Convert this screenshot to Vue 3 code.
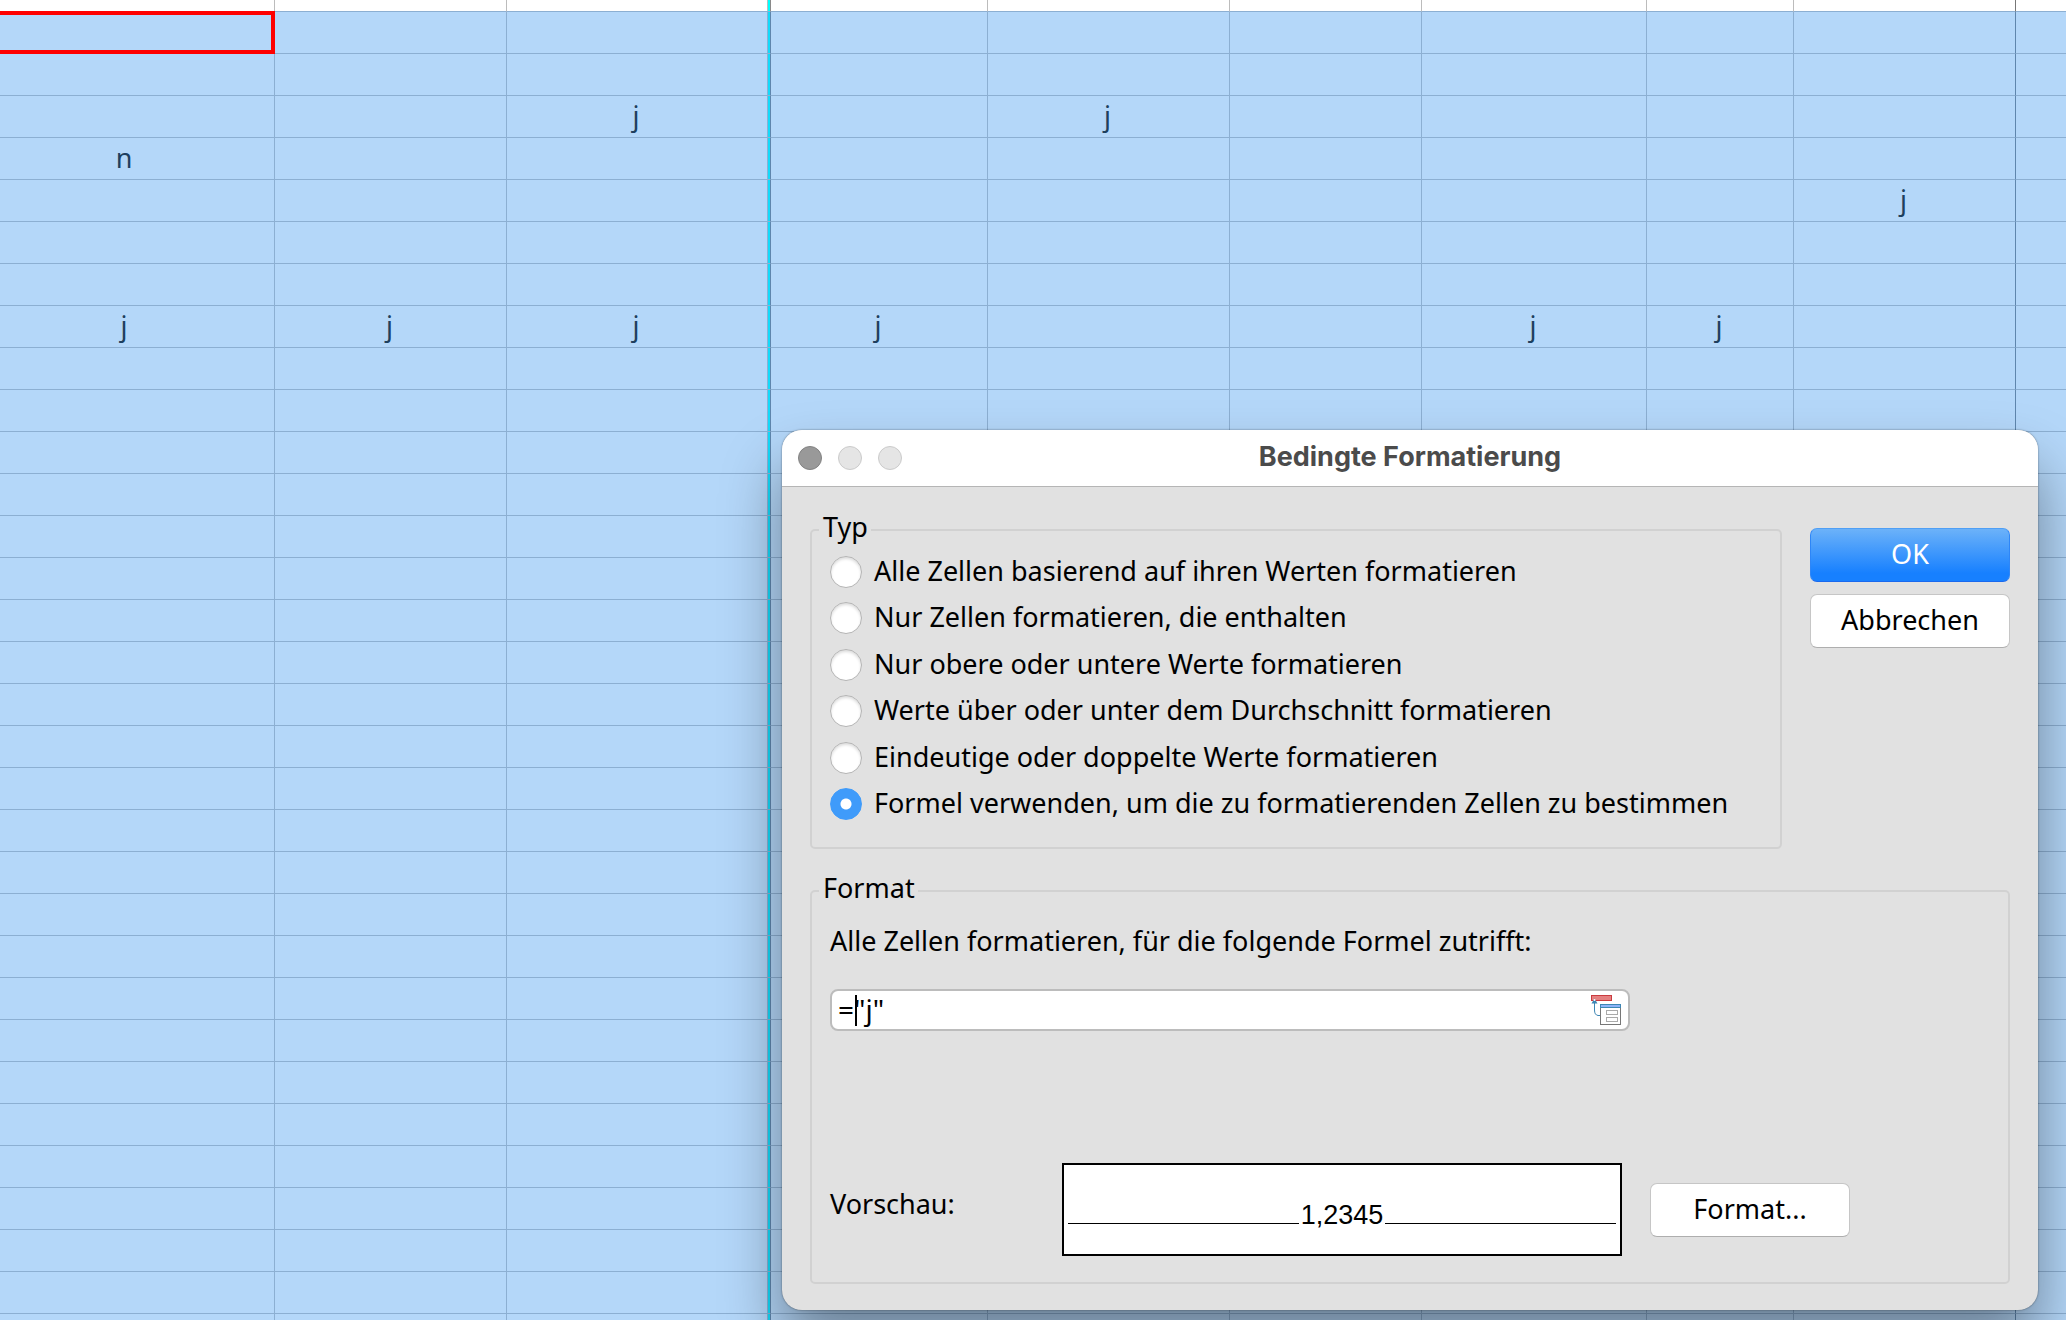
<script setup>
import { ref } from 'vue'

const columnCount = 10
const rowCount = 32

const entries = {
  '2:2': 'j',
  '2:4': 'j',
  '3:0': 'n',
  '4:8': 'j',
  '7:0': 'j',
  '7:1': 'j',
  '7:2': 'j',
  '7:3': 'j',
  '7:6': 'j',
  '7:7': 'j',
}

const rows = Array.from({ length: rowCount }, (_, r) =>
  Array.from({ length: columnCount }, (_, c) => entries[`${r}:${c}`] ?? '')
)

const types = [
  'Alle Zellen basierend auf ihren Werten formatieren',
  'Nur Zellen formatieren, die enthalten',
  'Nur obere oder untere Werte formatieren',
  'Werte über oder unter dem Durchschnitt formatieren',
  'Eindeutige oder doppelte Werte formatieren',
  'Formel verwenden, um die zu formatierenden Zellen zu bestimmen',
]

const selectedType = ref(5)
const formula = ref('="j"')
</script>

<template>
  <main class="workspace">
    <table class="sheet">
      <colgroup>
        <col v-for="n in columnCount" :key="n" :class="`col-${n}`" />
      </colgroup>
      <tbody>
        <tr class="above">
          <td v-for="n in columnCount" :key="n"></td>
        </tr>
        <tr v-for="(row, r) in rows" :key="r">
          <td v-for="(cell, c) in row" :key="c" :class="{ active: r === 0 && c === 0 }">{{ cell }}</td>
        </tr>
      </tbody>
    </table>

    <form class="dialog" role="dialog" aria-labelledby="dialog-title" @submit.prevent>
      <header class="titlebar">
        <div class="lights">
          <button type="button" class="light close" aria-label="Schließen"></button>
          <button type="button" class="light" aria-label="Minimieren" disabled></button>
          <button type="button" class="light" aria-label="Zoomen" disabled></button>
        </div>
        <h1 id="dialog-title">Bedingte Formatierung</h1>
      </header>

      <div class="body">
        <div class="top">
          <fieldset class="group types">
            <legend>Typ</legend>
            <div class="options">
              <label v-for="(type, i) in types" :key="type" class="option">
                <input v-model="selectedType" type="radio" name="type" :value="i" />
                <span>{{ type }}</span>
              </label>
            </div>
          </fieldset>
          <div class="actions">
            <button type="submit" class="push primary">OK</button>
            <button type="button" class="push">Abbrechen</button>
          </div>
        </div>

        <fieldset class="group format">
          <legend>Format</legend>
          <label class="caption" for="formula">Alle Zellen formatieren, für die folgende Formel zutrifft:</label>
          <div class="field">
            <input id="formula" v-model="formula" type="text" autocomplete="off" spellcheck="false" />
            <span class="caret"></span>
            <button type="button" class="picker" aria-label="Bereich auswählen">
              <svg width="32" height="32" viewBox="0 0 32 32" aria-hidden="true">
                <rect x="1.5" y="1.5" width="20" height="5" fill="#e58080" stroke="#c93b3f" />
                <path d="M10 21.5H8Q4.500 21 4.500 16V7" fill="none" stroke="#3d86b4" />
                <path d="M4.500 4.500L7.500 9.500H1.500Z" fill="#3d86b4" />
                <circle cx="4.500" cy="6" r="1" fill="#fff" />
                <rect x="10.500" y="10.500" width="20" height="20" fill="#fff" stroke="#777" />
                <rect x="10.500" y="10.500" width="20" height="3" fill="#8cb4f8" stroke="#3d86b4" />
                <rect x="16.500" y="16.500" width="11" height="4" fill="#fff" stroke="#aaa" />
                <rect x="16.500" y="23.500" width="11" height="4" fill="#fff" stroke="#aaa" />
              </svg>
            </button>
          </div>
          <div class="preview-row">
            <span class="preview-label">Vorschau:</span>
            <div class="preview"><span>1,2345</span></div>
            <button type="button" class="push">Format...</button>
          </div>
        </fieldset>
      </div>
    </form>
  </main>
</template>

<style>
body {
  margin: 0;
  overflow: hidden;
}
</style>

<style scoped>
.workspace {
  position: relative;
  height: 100vh;
  overflow: hidden;
  background: #fff;
  color: #000;
  font: 27px/32px "Noto Sans", "Open Sans", sans-serif;
}

.sheet {
  width: 100%;
  table-layout: fixed;
  border-collapse: separate;
  border-spacing: 0;
}
.col-1 { width: 275px; }
.col-2 { width: 232px; }
.col-3 { width: 264px; }
.col-4 { width: 217px; }
.col-5 { width: 242px; }
.col-6 { width: 192px; }
.col-7 { width: 225px; }
.col-8 { width: 147px; }
.col-9 { width: 222px; }

.sheet td {
  box-sizing: border-box;
  height: 42px;
  padding: 0 2px 2px 0;
  border: solid #8cafd2;
  border-width: 0 1px 1px 0;
  background-color: #b4d7f9;
  color: #1e3f5e;
  text-align: center;
}
.sheet td:first-child {
  padding-right: 26px;
}
.sheet td:nth-child(3) {
  padding-right: 5px;
  border-right-color: #5f86ad;
  background-image: linear-gradient(to left, #12dafa 2px, #8cafd2 2px, #8cafd2 3px, transparent 3px);
}
.sheet td:nth-child(9) {
  border-right-color: #5f86ad;
}
.sheet td:last-child {
  border-right: 0;
}
.sheet .above td {
  height: 12px;
  padding: 0;
  border-right-color: #bcbcbc;
  background-color: #fff;
}
.sheet .above td:nth-child(3) {
  border-right-color: #8a8a8a;
  background-image: linear-gradient(to left, #00ffff 2px, #bcbcbc 2px, #bcbcbc 3px, transparent 3px);
}
.sheet .above td:nth-child(9) {
  border-right-color: #777;
}
.sheet .active {
  position: relative;
}
.sheet .active::after {
  content: "";
  position: absolute;
  inset: -1px -1px -1px -4px;
  border: 4px solid #f00;
}

.dialog {
  position: absolute;
  top: 430px;
  left: 782px;
  right: 28px;
  border-radius: 20px;
  background: #e1e1e1;
  box-shadow: 0 0 2px rgba(0, 0, 0, 0.5), 0 36px 60px rgba(0, 0, 0, 0.4);
}
.titlebar {
  display: grid;
  grid-template-columns: 1fr auto 1fr;
  align-items: center;
  height: 56px;
  padding: 0 16px;
  border-bottom: 1px solid #b5b5b5;
  border-radius: 20px 20px 0 0;
  background: #fff;
}
.titlebar h1 {
  margin: 0;
  padding-bottom: 2px;
  color: #4b4b4b;
  font: bold 27px/32px Inter, sans-serif;
}
.lights {
  display: flex;
  gap: 16px;
}
.light {
  width: 24px;
  height: 24px;
  padding: 0;
  border: 1px solid #cbcbcb;
  border-radius: 50%;
  background: #e5e5e5;
}
.light.close {
  border-color: #828282;
  background: #999;
}

.body {
  padding: 24px 28px 26px;
}
.top {
  display: flex;
  gap: 28px;
  margin-bottom: 23px;
}
.group {
  box-sizing: border-box;
  min-width: 0;
  margin: 0;
  padding: 0 18px;
  border: 2px solid #d1d1d1;
  border-radius: 5px;
}
.group legend {
  margin-left: -11px;
  padding: 0 3px 6px 4px;
}
.types {
  flex: 1;
  padding-top: 7px;
  padding-bottom: 27px;
}
.options {
  display: flex;
  flex-direction: column;
  justify-content: space-between;
  min-height: 264px;
}
.option {
  display: flex;
  align-items: center;
  gap: 12px;
  height: 32px;
  white-space: nowrap;
}
.option span {
  padding-bottom: 2px;
}
.option input {
  appearance: none;
  box-sizing: border-box;
  flex: none;
  width: 32px;
  height: 32px;
  margin: 0;
  border: 1px solid #b4b4b4;
  border-radius: 50%;
  background: #fff;
  box-shadow: inset 0 2px 3px rgba(0, 0, 0, 0.14);
}
.option input:checked {
  border-color: #3f9bfa;
  background: radial-gradient(circle, #fff 5px, #3f9bfa 6px);
  box-shadow: none;
}

.actions {
  display: flex;
  flex: none;
  flex-direction: column;
  gap: 12px;
  padding-top: 17px;
}
.push {
  box-sizing: border-box;
  flex: none;
  width: 200px;
  height: 54px;
  padding: 0 0 2px;
  border: 1px solid #c6c6c6;
  border-bottom-color: #aeaeae;
  border-radius: 7px;
  background: #fff;
  color: #000;
  font: inherit;
}
.push.primary {
  border-color: #4f9ff5 #2e86f7 #1a69ee;
  background: linear-gradient(#6cb2f9, #1780ff 85%);
  color: #fff;
}

.format {
  padding-top: 15px;
  padding-bottom: 26px;
}
.caption {
  display: block;
  margin-bottom: 32px;
}
.field {
  position: relative;
  box-sizing: border-box;
  display: flex;
  align-items: center;
  width: 800px;
  max-width: 100%;
  height: 42px;
  margin-bottom: 132px;
  padding: 0 6px;
  border: 2px solid #bcbcbc;
  border-radius: 8px;
  background: #fff;
}
.field input {
  flex: 1;
  min-width: 0;
  height: 34px;
  padding: 0 0 2px;
  border: 0;
  outline: 0;
  background: none;
  color: #000;
  font: inherit;
  font-size: 28px;
}
.caret {
  position: absolute;
  top: 4px;
  left: 23px;
  width: 2px;
  height: 31px;
  background: #000;
}
.picker {
  display: flex;
  flex: none;
  padding: 0;
  border: 0;
  background: none;
}
.preview-row {
  display: flex;
  align-items: center;
}
.preview-label {
  width: 232px;
  padding-bottom: 11px;
}
.preview {
  box-sizing: border-box;
  display: flex;
  align-items: baseline;
  gap: 2px;
  width: 560px;
  height: 93px;
  margin-right: 28px;
  padding: 34px 4px 0;
  border: 2px solid #000;
  background: #fff;
  font: 27px/32px "Liberation Sans", Arial, sans-serif;
}
.preview::before,
.preview::after {
  content: "";
  flex: 1;
  height: 1px;
  margin-bottom: -2px;
  background: #000;
}
</style>
